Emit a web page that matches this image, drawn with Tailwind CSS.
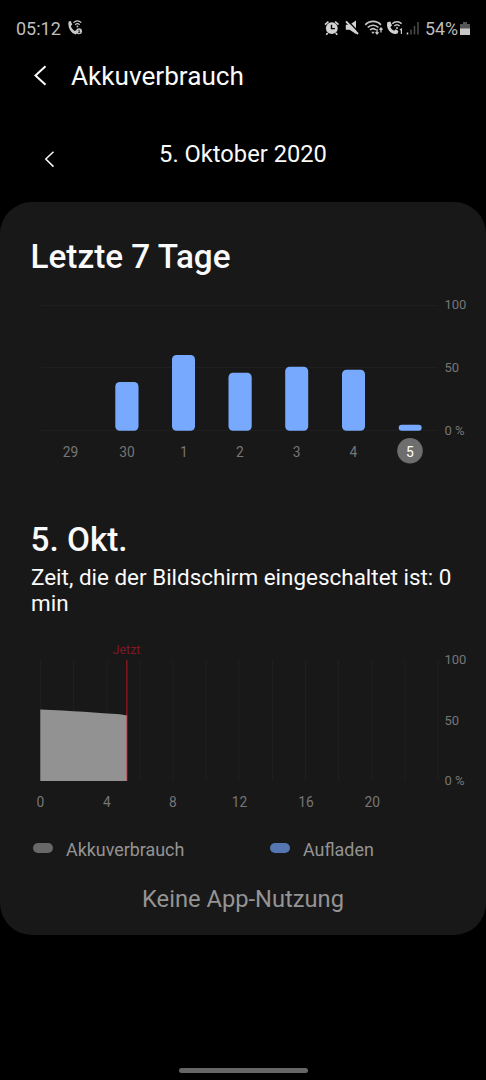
<!DOCTYPE html>
<html lang="de">
<head>
<meta charset="utf-8">
<title>Akkuverbrauch</title>
<script src="https://cdn.jsdelivr.net/npm/@tailwindcss/browser@4"></script>
</head>
<body class="bg-black">
<div class="flex h-[1080px] w-[486px] flex-col overflow-hidden bg-black font-['Roboto',sans-serif] text-[#fafafa]">
  <!-- Status bar -->
  <div class="flex h-12 shrink-0 items-center pt-[9px] pr-4 pl-4 text-[18px] leading-6 text-[#bebebe]">
    <span class="w-[50px] whitespace-nowrap">05:12</span>
    <svg class="h-5 w-5" viewBox="0 0 20 20" fill="none">
      <path d="M2.600 2.600 4.800 2l1.500 3.800-1.500 1.300c.6 2 2 3.900 4 5l1.300-.8 1 3-1.400 1.100C5.200 14.800 1.400 8.700 2.600 2.600Z" fill="#c8c8c8"/>
      <path d="M7.500 3.600c2.200-2.400 5.600-2.400 7.800 0M9.200 5.700c1.400-1.300 3-1.300 4.400 0" stroke="#c8c8c8" stroke-width="1.200"/>
      <circle cx="11.400" cy="7.400" r=".9" fill="#c8c8c8"/>
      <circle cx="13" cy="12.200" r="3" fill="#c8c8c8"/>
      <path d="M12.300 11.200h.9v2.400m-1 0h2" stroke="#000" stroke-width=".8"/>
    </svg>
    <div class="ml-auto flex items-center">
      <svg class="h-5 w-[100px]" viewBox="322 18.500 100 20" fill="none">
        <path d="M325 24.100l3.400-2.900M338.500 24.100l-3.400-2.900M327.800 32.500l-1.600 1.800M335.700 32.500l1.600 1.800" stroke="#d2d2d2" stroke-width="1.700"/>
        <circle cx="331.800" cy="27.700" r="5.900" fill="#d2d2d2"/>
        <path d="M331.500 24.200v3.900h3.400" stroke="#000" stroke-width="1.400"/>
        <path d="M345.800 24.300h3.800l6.400-4.300v13.600l-6.400-4.300h-3.800z" fill="#d2d2d2"/>
        <path d="M347 19.600l12 12.400" stroke="#000" stroke-width="1.400"/>
        <path d="M346 20.800l12 12.700" stroke="#d2d2d2" stroke-width="1.900"/>
        <path d="M365.300 24.300c4.200-4.500 11.400-4.500 15.600 0M367.800 27c2.900-3 7.700-3 10.600 0M370 29.500c1.800-1.700 4.300-1.700 6 0" stroke="#c8c8c8" stroke-width="1.700"/>
        <path d="M371.200 31.200h3.500l-1.700 2.300z" fill="#c8c8c8"/>
        <path d="M377 28.500v4.600M375.500 31.600l1.500 1.800 1.500-1.800M381 32v-4.200M379.500 29.300l1.500-1.700 1.500 1.700" stroke="#c8c8c8" stroke-width="1.300"/>
        <path d="M387.300 21.700l3-.6 1.700 4-1.600 1.400c.7 1.700 2 3 3.700 3.800l1.500-1.500 2.800 1.800-.8 2.500c-5.800 1.900-12-4.400-10.300-11.400Z" fill="#d2d2d2"/>
        <path d="M392.300 23.300c2.600-2.600 6.800-2.600 9.300 0M394.300 25.500c1.500-1.500 3.800-1.500 5.300 0" stroke="#c8c8c8" stroke-width="1.500"/>
        <circle cx="397" cy="27.400" r="1" fill="#c8c8c8"/>
        <path d="M399.800 29.500l1.600-.9v5" stroke="#c8c8c8" stroke-width="1.200"/>
        <path d="M407.500 32v2" stroke="#d2d2d2" stroke-width="1.500"/>
        <path d="M411 29v5M414.500 25.500v8.500M418 21.500v12.500" stroke="#4b4b4b" stroke-width="1.500"/>
      </svg>
      <span class="ml-[3px] w-[35px] whitespace-nowrap text-[17.800px]">54%</span>
      <svg class="h-5 w-[10px]" viewBox="0 0 10 20"><path d="M0 5h3V3h4v2h3v5H0z" fill="#555"/><path d="M0 9.500h10v6.500H0z" fill="#c8c8c8"/></svg>
    </div>
  </div>

  <!-- Header -->
  <header class="flex h-14 shrink-0 items-center pl-[34px]">
    <svg class="h-6 w-[13px]" viewBox="0 0 13 24" fill="none"><path d="M11.500 2.300 1.500 11.500l10 9.300" stroke="#fafafa" stroke-width="2"/></svg>
    <h1 class="ml-6 text-[26.150px] leading-8">Akkuverbrauch</h1>
  </header>

  <!-- Day navigation -->
  <nav class="grid h-[98px] shrink-0 grid-cols-[120px_1fr_120px] items-start pt-[34px]">
    <svg class="mt-3 ml-11 h-[18px] w-[11px]" viewBox="0 0 11 18" fill="none"><path d="M9.500 1.800 1.800 9l7.700 7.600" stroke="#fafafa" stroke-width="1.500"/></svg>
    <span class="text-center text-[23.700px] leading-8">5. Oktober 2020</span>
  </nav>

  <main class="flex h-[733px] shrink-0 flex-col rounded-[32px] bg-[#181818]">
    <h2 class="mt-9 ml-[30.500px] text-[33.300px] leading-[38px] font-medium">Letzte 7 Tage</h2>
    <svg class="mt-[14px] h-[180px] w-[486px] shrink-0" viewBox="0 290 486 180" font-family="Roboto, sans-serif">
      <path d="M41 305.500H438M41 367.500H438M41 430.500H438" stroke="#1f1f1f"/>
      <g fill="#77aaff">
        <rect x="115.300" y="382" width="23.200" height="48.700" rx="4.500"/>
        <rect x="172" y="355" width="23" height="75.700" rx="4.500"/>
        <rect x="228.500" y="372.700" width="23.200" height="58" rx="4.500"/>
        <rect x="285.200" y="366.700" width="23" height="64" rx="4.500"/>
        <rect x="342" y="369.700" width="23" height="61" rx="4.500"/>
        <rect x="398.700" y="424.700" width="23" height="6" rx="3"/>
      </g>
      <circle cx="410" cy="450.700" r="12.800" fill="#6e6e6e"/>
      <g font-size="13.800" fill="#767676" text-anchor="middle">
        <text x="70.500" y="456.500">29</text><text x="127" y="456.500">30</text><text x="184" y="456.500">1</text><text x="240" y="456.500">2</text><text x="296.700" y="456.500">3</text><text x="353.500" y="456.500">4</text><text x="410" y="456.500" fill="#fff">5</text>
      </g>
      <g font-size="13" fill="#767676">
        <text x="444.500" y="309.300">100</text><text x="444.500" y="371.800">50</text><text x="444.500" y="434.500">0 %</text>
      </g>
    </svg>

    <h2 class="mt-[51px] ml-[30.500px] text-[33.300px] leading-[38px] font-medium">5. Okt.</h2>
    <p class="mt-[5px] mr-6 ml-[31px] text-[22.450px] leading-[26px]">Zeit, die der Bildschirm eingeschaltet ist: 0 min</p>
    <svg class="mt-[21px] h-[180px] w-[486px] shrink-0" viewBox="0 637 486 180" font-family="Roboto, sans-serif">
      <path d="M40.500 660V781M73.500 660V781M107 660V781M140 660V781M173 660V781M206 660V781M239 660V781M272.500 660V781M305.500 660V781M338.500 660V781M372 660V781M405 660V781M438 660V781" stroke="#1f1f1f"/>
      <path d="M40.300 709.500C70 710.500 100 713.200 120 714.300L127 715.500V781H40.300Z" fill="#929292"/>
      <path d="M126.800 660V715" stroke="#811722" stroke-width="1.500"/>
      <path d="M126.800 715V781" stroke="#c64f5b" stroke-width="1"/>
      <text x="126.500" y="654" font-size="12.500" fill="#811722" text-anchor="middle">Jetzt</text>
      <g font-size="13" fill="#767676">
        <text x="444.500" y="664.200">100</text><text x="444.500" y="724.800">50</text><text x="444.500" y="785.300">0 %</text>
      </g>
      <g font-size="13.800" fill="#767676" text-anchor="middle">
        <text x="40.500" y="807">0</text><text x="107" y="807">4</text><text x="173" y="807">8</text><text x="239.500" y="807">12</text><text x="306" y="807">16</text><text x="372.300" y="807">20</text>
      </g>
    </svg>
    <div class="mt-[21px] grid shrink-0 grid-cols-[237px_1fr] pl-[33px] text-[17.900px] leading-6 text-[#949494]">
      <div class="flex items-center"><span class="mr-[13px] mb-1 h-[10px] w-5 rounded-full bg-[#686868]"></span>Akkuverbrauch</div>
      <div class="flex items-center"><span class="mr-[13px] mb-1 h-[10px] w-5 rounded-full bg-[#5477b3]"></span>Aufladen</div>
    </div>
    <p class="mt-[21px] text-center text-[23.700px] leading-8 text-[#949494]">Keine App-Nutzung</p>
  </main>
  <div class="mx-auto mt-auto mb-[7px] h-[5px] w-[129px] shrink-0 rounded-full bg-[#666]"></div>
</div>
</body>
</html>
